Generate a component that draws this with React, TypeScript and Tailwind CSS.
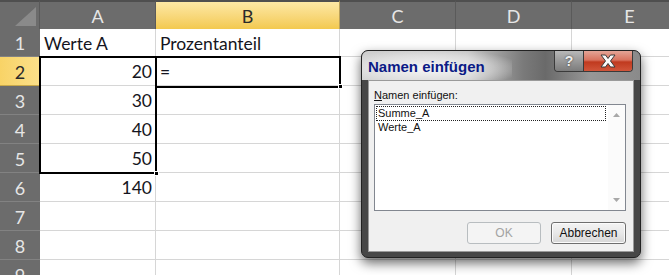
import React from "react";

const font = { fontFamily: "Lato, 'Liberation Sans', sans-serif" };
const uiFont = { fontFamily: "'Liberation Sans', Arial, sans-serif" };

function ColHeader({ label, selected }: { label: string; selected?: boolean }) {
  return (
    <div
      className={
        selected
          ? "flex items-center justify-center border-t-2 border-t-[#4f4f4f] border-r border-r-[#b9a05a] bg-gradient-to-b from-[#fde8a4] to-[#f3c94e] text-[18px] text-[#2a2a2a]"
          : "flex items-center justify-center border-t-2 border-t-[#4f4f4f] border-r border-r-[#5a5a5a] bg-[#6c6c6c] text-[18px] text-[#e6e6e6]"
      }
      style={font}
    >
      <span className="pt-[1px]">{label}</span>
    </div>
  );
}

function RowHeader({ n, selected }: { n: number; selected?: boolean }) {
  return (
    <div
      className={
        selected
          ? "flex items-center justify-center border-b border-b-[#c9a94a] bg-gradient-to-r from-[#f8d366] to-[#fbe08a] text-[18px] text-[#2a2a2a]"
          : "flex items-center justify-center border-b border-b-[#828282] bg-[#6c6c6c] text-[18px] text-[#e6e6e6]"
      }
      style={font}
    >
      <span className="pt-[2px]">{n}</span>
    </div>
  );
}

function Cell({ children, right }: { children?: React.ReactNode; right?: boolean }) {
  return (
    <div
      className={
        "flex items-center border-r border-b border-[#d6d6d6] bg-white text-[17.5px] text-[#141420] " +
        (right ? "justify-end pr-[3px]" : "justify-start pl-[4px]")
      }
      style={font}
    >
      <span className="pt-[2px] leading-none">{children}</span>
    </div>
  );
}

export default function App() {
  const rows: { n: number; a?: string; b?: string }[] = [
    { n: 1, a: "Werte A", b: "Prozentanteil" },
    { n: 2, a: "20", b: "=" },
    { n: 3, a: "30" },
    { n: 4, a: "40" },
    { n: 5, a: "50" },
    { n: 6, a: "140" },
    { n: 7 },
    { n: 8 },
    { n: 9 },
  ];

  return (
    <div className="relative w-[669px] h-[275px] overflow-hidden bg-white">
      <div className="grid grid-cols-[40px_116px_184px_116px_116px_116px] grid-rows-[29px_28px_repeat(8,29px)] w-[688px]">
        <div className="relative border-t-2 border-t-[#4f4f4f] border-r border-r-[#5a5a5a] bg-[#6c6c6c]">
          <svg className="absolute right-[3px] bottom-[3px]" width="21" height="19" viewBox="0 0 21 19">
            <polygon points="21,0 21,19 0,19" fill="#8a8a8a" />
          </svg>
        </div>
        <ColHeader label="A" />
        <ColHeader label="B" selected />
        <ColHeader label="C" />
        <ColHeader label="D" />
        <ColHeader label="E" />
        {rows.map((r) => (
          <React.Fragment key={r.n}>
            <RowHeader n={r.n} selected={r.n === 2} />
            <Cell right={r.n !== 1}>{r.a}</Cell>
            <Cell>{r.b}</Cell>
            <Cell />
            <Cell />
            <Cell />
          </React.Fragment>
        ))}
      </div>

      {/* selection A2:A5 */}
      <div className="absolute left-[39px] top-[56px] w-[118px] h-[118px] border-2 border-black pointer-events-none" />
      <div className="absolute left-[154px] top-[171px] w-[5px] h-[5px] bg-black border border-white" />
      {/* active cell B2 */}
      <div className="absolute left-[155px] top-[56px] w-[186px] h-[32px] border-2 border-black pointer-events-none" />
      <div className="absolute left-[338px] top-[84px] w-[5px] h-[5px] bg-black border border-white" />

      {/* Dialog */}
      <div className="absolute left-[361px] top-[50px] w-[280px] h-[208px] rounded-[7px] border border-[#222] bg-[#474747] shadow-[0_5px_12px_rgba(0,0,0,0.6)] flex flex-col overflow-hidden">
        <div className="relative h-[29px] shrink-0 flex items-start justify-between bg-[linear-gradient(90deg,#cfcfcf_0%,#c6c6c6_38%,#7a7a7a_58%,#6a6a6a_66%,#979797_82%,#8a8a8a_100%)]">
          <div className="absolute left-0 top-0 w-[150px] h-[29px] bg-[radial-gradient(ellipse_at_45%_60%,rgba(255,255,255,0.85)_0%,rgba(255,255,255,0.35)_55%,rgba(255,255,255,0)_80%)]" />
          <span
            className="relative ml-[6px] mt-[8px] text-[15px] font-bold text-[#0b1a86] leading-none"
            style={uiFont}
          >
            Namen einfügen
          </span>
          <div className="relative mr-[7px] flex h-[21px] rounded-b-[4px] border border-t-0 border-[#3a3a3a] overflow-hidden">
            <div className="w-[29px] flex items-center justify-center border-r border-[#3a3a3a] bg-gradient-to-b from-[#b8b8b8] to-[#7c7c7c]">
              <span
                className="text-[14px] font-bold text-[#eeeeee] leading-none [text-shadow:0_0_2px_#333]"
                style={uiFont}
              >
                ?
              </span>
            </div>
            <div className="w-[48px] flex items-center justify-center bg-[linear-gradient(180deg,#e4a597_0%,#d9735f_45%,#c03a1f_55%,#d1553a_100%)]">
              <svg width="18" height="14" viewBox="0 0 18 14">
                <path
                  d="M2 1 H6.5 L9 4.5 L11.5 1 H16 L11.5 7 L16 13 H11.5 L9 9.5 L6.5 13 H2 L6.5 7 Z"
                  fill="#fafafa"
                  stroke="#3a3a3a"
                  strokeWidth="1"
                  strokeLinejoin="round"
                />
              </svg>
            </div>
          </div>
        </div>
        <div className="flex-1 px-[6px] pb-[5px]">
          <div className="h-full border border-[#9a9a9a] bg-[#f0f0f0] flex flex-col pl-[5px] pr-[7px]" style={uiFont}>
            <div className="mt-[8px] text-[11px] leading-[13px] text-[#111]">
              <span className="underline">N</span>amen einfügen:
            </div>
            <div className="mt-[2px] h-[107px] border border-[#828790] bg-white flex">
              <div className="flex-1 flex flex-col pt-[1px] pl-[1px] text-[11px] leading-[13px] text-[#111]">
                <div className="border border-dotted border-[#222] pl-[1px] mr-[2px]">Summe_A</div>
                <div className="pl-[2px]">Werte_A</div>
              </div>
              <div className="w-[17px] flex flex-col justify-between items-center py-[8px] bg-[#fbfbfb]">
                <svg width="7" height="4" viewBox="0 0 7 4">
                  <polygon points="3.5,0 7,4 0,4" fill="#a8a8a8" />
                </svg>
                <svg width="7" height="4" viewBox="0 0 7 4">
                  <polygon points="0,0 7,0 3.5,4" fill="#a8a8a8" />
                </svg>
              </div>
            </div>
            <div className="mt-[11px] flex justify-end gap-[10px]">
              <div className="w-[74px] h-[22px] rounded-[3px] border border-[#b8bdc0] bg-[#f4f4f4] flex items-center justify-center text-[12px] text-[#a3a3a3]">
                OK
              </div>
              <div className="w-[75px] h-[22px] rounded-[3px] border border-[#6e6e6e] bg-gradient-to-b from-[#f3f3f3] via-[#e8e8e8] to-[#d6d6d6] flex items-center justify-center text-[12px] text-[#111] shadow-[inset_0_0_0_1px_#fbfbfb]">
                Abbrechen
              </div>
            </div>
          </div>
        </div>
      </div>
    </div>
  );
}
